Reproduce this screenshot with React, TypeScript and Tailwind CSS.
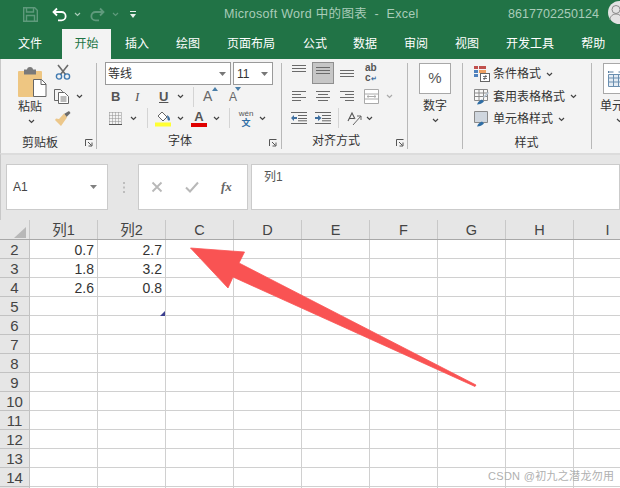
import React from "react";

const FONT = { fontFamily: '"Liberation Sans","Noto Sans CJK SC",sans-serif' };

const Chev = ({ c = "#444", className = "" }: { c?: string; className?: string }) => (
  <svg width="7" height="5" viewBox="0 0 7 5" className={className}>
    <path d="M1 1l2.5 2.5L6 1" fill="none" stroke={c} strokeWidth="1.2" />
  </svg>
);
const Caret = ({ c = "#777" }: { c?: string }) => (
  <svg width="7" height="4" viewBox="0 0 7 4"><path d="M0 0h7L3.5 4z" fill={c} /></svg>
);
const Launcher = () => (
  <svg width="8" height="8" viewBox="0 0 8 8">
    <path d="M.5 7V.5H7.5M3 3l3.5 3.5M3.500 7H7V3.500" fill="none" stroke="#555" strokeWidth="1" />
  </svg>
);
const Sep = () => <div className="w-px h-[86px] mt-[4px] bg-[#b8b8b8] shrink-0" />;
const VSep = ({ h = 20 }: { h?: number }) => (
  <div className="w-px bg-[#d4d4d4] shrink-0" style={{ height: h }} />
);

const Lines = ({ rows, w = 14 }: { rows: [number, number][]; w?: number }) => (
  <svg width={w} height="14" viewBox={`0 0 ${w} 14`}>
    {rows.map(([x, l], i) => (
      <rect key={i} x={x} y={1 + i * 3} width={l} height="1" fill="#6a6a6a" />
    ))}
  </svg>
);

const Indent = ({ right }: { right?: boolean }) => (
  <svg width="16" height="12" viewBox="0 0 16 12">
    <path d="M0 .5h16M7 3.500h9M7 6.500h9M0 11.500h16M7 8.800h9" stroke="#666" strokeWidth="1" fill="none" />
    {right ? (
      <path d="M0 5h3V3l3.500 3L3 9V7H0z" fill="#3f6f9f" />
    ) : (
      <path d="M6 5H3V3L0 6l3 3V7h3z" fill="#3f6f9f" />
    )}
  </svg>
);

const Row = ({ n, cells }: { n?: number; cells?: [string, string] }) => (
  <div className="flex h-[19px]">
    <div className="w-[30px] shrink-0 h-[19px] bg-[#e6e6e6] border-r border-b border-[#c2c2c2] flex items-end justify-center text-[15px] leading-[17px] text-[#444]">
      {n}
    </div>
    {Array.from({ length: 9 }).map((_, i) => (
      <div
        key={i}
        className="w-[68px] shrink-0 h-[19px] border-r border-b border-[#d0d0d0] flex items-end justify-end pr-[3px] text-[14px] leading-[16px] text-[#333]"
      >
        {cells && i < 2 ? cells[i] : ""}
      </div>
    ))}
  </div>
);

const tabs: [string, number][] = [
  ["插入", 125], ["绘图", 176], ["页面布局", 227], ["公式", 303], ["数据", 353],
  ["审阅", 404], ["视图", 455], ["开发工具", 506], ["帮助", 581],
];

const ColHead = ({ t, w = 68 }: { t: string; w?: number }) => (
  <div
    className="shrink-0 h-[19px] border-r border-[#c8c8c8] flex items-end justify-center text-[14.5px] leading-[18px] text-[#444]"
    style={{ width: w }}
  >
    {t}
  </div>
);

export default function App() {
  return (
    <div className="relative w-[620px] h-[488px] overflow-hidden bg-white" style={FONT}>
      {/* Title bar */}
      <div className="h-[29px] bg-[#217346] flex items-center relative text-[#a9ccb9]">
        <svg width="15" height="15" viewBox="0 0 15 15" className="ml-[23px]">
          <path d="M.7.7h11l2.600 2.600v11H.7z" fill="none" stroke="#5f9a7c" strokeWidth="1.400" />
          <path d="M3.500 1v4h7V1M3.500 14V8.500h8V14" fill="none" stroke="#5f9a7c" strokeWidth="1.400" />
        </svg>
        <svg width="16" height="15" viewBox="0 0 16 15" className="ml-[14px]">
          <path d="M5 1.500L1.500 5 5 8.500M2 5h7.500a4 4 0 0 1 0 8.300H6" fill="none" stroke="#fff" strokeWidth="1.800" />
        </svg>
        <Chev c="#a9ccb9" className="ml-[6px]" />
        <svg width="16" height="15" viewBox="0 0 16 15" className="ml-[8px]">
          <path d="M11 1.500L14.500 5 11 8.500M14 5H6.500a4 4 0 0 0 0 8.300H10" fill="none" stroke="#5f9a7c" strokeWidth="1.800" />
        </svg>
        <Chev c="#5f9a7c" className="ml-[7px]" />
        <svg width="6" height="8" viewBox="0 0 6 8" className="ml-[11px]">
          <path d="M0 0h6v1H0zM0 3h6L3 7z" fill="#e8f0ec" />
        </svg>
        <div className="ml-[88px] text-[12.5px] whitespace-pre tracking-[0.3px]">Microsoft Word 中的图表  -  Excel</div>
        <div className="ml-auto mr-[21px] text-[12.5px] tracking-[0.05px]">8617702250124</div>
        <div className="absolute left-[608px] top-[1px] w-[24px] h-[23px] rounded-full bg-[#e3e3e3] flex justify-center">
          <svg width="14" height="16" viewBox="0 0 14 16" className="-ml-[8px] mt-[3px]">
            <circle cx="7" cy="5.500" r="4" fill="none" stroke="#8a8a8a" strokeWidth="1" />
            <path d="M1 16c0-4 3-6 6-6s6 2 6 6" fill="none" stroke="#8a8a8a" strokeWidth="1" />
          </svg>
        </div>
      </div>

      {/* Tabs */}
      <div className="h-[30px] bg-[#217346] flex items-center text-[12px] text-white">
        <div className="ml-[18px] w-[24px] whitespace-nowrap">文件</div>
        <div className="ml-[20px] w-[49px] h-[30px] bg-[#f3f3f3] text-[#217346] flex items-center justify-center">开始</div>
        <div className="relative flex-1 h-full flex items-center">
          {tabs.map(([t], i) => (
            <div
              key={t}
              className="whitespace-nowrap"
              style={{ marginLeft: i === 0 ? 14 : tabs[i][1] - tabs[i - 1][1] - tabs[i - 1][0].length * 12 }}
            >
              {t}
            </div>
          ))}
        </div>
      </div>

      {/* Ribbon */}
      <div className="h-[94px] bg-[#f3f3f3] flex text-[#333] border-l border-[#c8c8c8] text-[12px]">
        {/* Clipboard */}
        <div className="w-[95px] shrink-0 flex flex-col">
          <div className="flex h-[74px]">
            <div className="w-[53px] pl-[17px] pt-[8px] flex flex-col">
              <svg width="29" height="30" viewBox="0 0 29 30">
                <rect x="0" y="4" width="24" height="26" rx="1" fill="#eec682" />
                <rect x="6" y="2.500" width="12" height="5" fill="#7a7a7a" />
                <circle cx="12" cy="3" r="3" fill="#7a7a7a" />
                <path d="M15.500 12.500h8l4.500 4.500v12.500h-12.500z" fill="#fff" stroke="#666" />
                <path d="M23 12.500v5h5" fill="none" stroke="#666" />
              </svg>
              <div className="text-[12px] leading-[16px] mt-[2px] whitespace-nowrap">粘贴</div>
              <Chev className="ml-[10px] mt-[4px]" />
            </div>
            <div className="flex flex-col pt-[5px]">
              <svg width="16" height="16" viewBox="0 0 16 16" className="ml-[1px]">
                <path d="M3 1l7.500 9.500M13 1L5.500 10.500" stroke="#6b6b6b" strokeWidth="1.600" fill="none" />
                <circle cx="4" cy="12.500" r="2.600" fill="none" stroke="#3f79b0" strokeWidth="1.400" />
                <circle cx="12" cy="12.500" r="2.600" fill="none" stroke="#3f79b0" strokeWidth="1.400" />
              </svg>
              <div className="flex items-center mt-[9px]">
                <svg width="15" height="15" viewBox="0 0 15 15">
                  <path d="M.5.500h6l2 2V3M.5.500v11H4" fill="none" stroke="#666" />
                  <path d="M4.500 3.500h6l4 4v7h-10z" fill="#fff" stroke="#666" />
                  <path d="M6.500 8h6M6.500 10h6M6.500 12h6" stroke="#777" />
                </svg>
                <Chev className="ml-[7px]" />
              </div>
              <svg width="17" height="16" viewBox="0 0 17 16" className="mt-[7px]">
                <path d="M10 3l5-3 1.500 2-4 4z" fill="#6b6b6b" />
                <path d="M10 2.500l3 4L7 15 1 9 2 7.500l3 .5z" fill="#ecc78a" />
              </svg>
            </div>
          </div>
          <div className="flex items-center h-[20px]">
            <div className="ml-[21px] w-[36px] text-center whitespace-nowrap leading-[20px]">剪贴板</div>
            <div className="ml-[27px] flex"><Launcher /></div>
          </div>
        </div>
        <Sep />

        {/* Font */}
        <div className="w-[184px] shrink-0 flex flex-col">
          <div className="flex pt-[3px] pl-[8px] gap-[2px] h-[27px]">
            <div className="w-[126px] h-[23px] bg-white border border-[#9a9a9a] flex items-center justify-between pl-[2px] pr-[4px] text-[12px]">
              <span>等线</span><Caret />
            </div>
            <div className="w-[40px] h-[23px] bg-white border border-[#9a9a9a] flex items-center justify-between pl-[3px] pr-[4px] text-[12px]">
              <span>11</span><Caret />
            </div>
          </div>
          <div className="flex items-center h-[21px] pl-[14px]">
            <span className="w-[24px] font-bold text-[13px] text-[#555]">B</span>
            <span className="w-[24px] italic text-[13px] text-[#555]" style={{ fontFamily: '"Liberation Serif",serif' }}>I</span>
            <span className="w-[17px] underline font-bold text-[13px] text-[#555]">U</span>
            <Chev className="ml-[1px]" />
            <div className="ml-[9px]"><VSep /></div>
            <div className="relative ml-[9px] w-[22px] text-[#666] text-[14px]">
              A
              <svg width="6" height="4" viewBox="0 0 6 4" className="absolute left-[9px] top-[1px]"><path d="M0 4h6L3 0z" fill="#4a7ea8" /></svg>
            </div>
            <div className="relative ml-[4px] w-[14px] text-[#666] text-[12px]">
              A
              <svg width="6" height="4" viewBox="0 0 6 4" className="absolute left-[6px] -top-[1px]"><path d="M0 0h6L3 4z" fill="#4a7ea8" /></svg>
            </div>
          </div>
          <div className="flex items-center h-[22px] pl-[12px]">
            <svg width="13" height="13" viewBox="0 0 13 13">
              <path d="M.5.500h12M.5 3.500h12M.5 6.500h12M.5 9.500h12M.5.500v12M3.500.500v12M6.500.500v12M9.500.500v12M12.500.500v12" stroke="#8f8f8f" strokeWidth="1" strokeDasharray="1 1" fill="none" />
              <path d="M0 12.500h13" stroke="#555" />
            </svg>
            <Chev className="ml-[8px]" />
            <div className="ml-[10px]"><VSep /></div>
            <svg width="16" height="17" viewBox="0 0 16 17" className="ml-[7px]">
              <path d="M3 6l4-4 5 5-4 4z" fill="#fff" stroke="#666" />
              <path d="M12 5c2 1 3 3 3 4.500S13 11 12.500 9.500z" fill="#3f6f9f" />
              <rect x="0" y="12.500" width="16" height="4" fill="#ffff33" />
            </svg>
            <Chev className="ml-[6px]" />
            <div className="ml-[7px] w-[16px] flex flex-col items-center">
              <span className="text-[13px] font-bold leading-[13px] text-[#555]">A</span>
              <div className="w-[16px] h-[4px] bg-[#e00000]" />
            </div>
            <Chev className="ml-[6px]" />
            <div className="ml-[9px]"><VSep /></div>
            <div className="ml-[8px] w-[16px] flex flex-col items-center leading-none">
              <span className="text-[8px] text-[#555] leading-[9px]">wén</span>
              <span className="text-[9px] text-[#2f6ea5] font-bold leading-[10px]">文</span>
            </div>
            <Chev className="ml-[5px]" />
          </div>
          <div className="flex items-center h-[24px]">
            <div className="ml-[71px] w-[24px] whitespace-nowrap">字体</div>
            <div className="ml-[77px] flex mt-[4px]"><Launcher /></div>
          </div>
        </div>
        <Sep />

        {/* Alignment */}
        <div className="w-[125px] shrink-0 flex flex-col">
          <div className="flex h-[27px] pl-[10px] pt-[3px]">
            <div className="w-[14px] mt-[2px]"><Lines rows={[[0, 14], [0, 14], [0, 14]]} /></div>
            <div className="ml-[6px] w-[22px] h-[22px] bg-[#c6c6c6] border border-[#8f8f8f] flex items-center justify-center">
              <Lines rows={[[0, 14], [0, 14], [0, 14]]} />
            </div>
            <div className="ml-[6px] w-[14px] mt-[7px]"><Lines rows={[[0, 14], [0, 14], [0, 14]]} /></div>
            <div className="ml-[11px] w-[14px] flex flex-col text-[10px] leading-[10px] mt-[1px] text-[#555] font-bold">
              <span>ab</span>
              <div className="flex items-end">
                <span>c</span>
                <span className="text-[#3f6f9f] text-[7px] leading-[8px]">↵</span>
              </div>
            </div>
          </div>
          <div className="flex items-center h-[21px] pl-[10px]">
            <Lines rows={[[0, 14], [0, 9], [0, 14], [0, 9]]} />
            <div className="ml-[10px]"><Lines rows={[[0, 14], [2, 10], [0, 14], [2, 10]]} /></div>
            <div className="ml-[10px]"><Lines rows={[[0, 14], [5, 9], [0, 14], [5, 9]]} /></div>
            <svg width="15" height="15" viewBox="0 0 15 15" className="ml-[10px]">
              <path d="M.5.500h14v14H.5zM.5 5h14M.5 10h14" fill="#fff" stroke="#aaa" />
              <path d="M3 7.500h9M3 7.500l1.500-1M3 7.500l1.500 1M12 7.500l-1.500-1M12 7.500l-1.500 1" stroke="#aaa" fill="none" />
            </svg>
            <Chev c="#aaa" className="ml-[7px]" />
          </div>
          <div className="flex items-center h-[22px] pl-[9px]">
            <Indent />
            <div className="ml-[8px]"><Indent right /></div>
            <div className="ml-[7px]"><VSep /></div>
            <svg width="16" height="16" viewBox="0 0 16 16" className="ml-[7px]">
              <path d="M2 11l4-8 3 6M3 8.500h5" stroke="#555" strokeWidth="1.100" fill="none" />
              <path d="M7 15L15 6M11 6h4v4" stroke="#666" fill="none" />
            </svg>
            <Chev className="ml-[4px]" />
          </div>
          <div className="flex items-center h-[24px]">
            <div className="ml-[30px] w-[48px] whitespace-nowrap">对齐方式</div>
            <div className="ml-[36px] flex mt-[4px]"><Launcher /></div>
          </div>
        </div>
        <Sep />

        {/* Number */}
        <div className="w-[54px] shrink-0 flex flex-col items-center pt-[4px]">
          <div className="w-[32px] h-[31px] bg-white border border-[#a8a8a8] flex items-center justify-center text-[15px] text-[#555]">%</div>
          <div className="mt-[3px] text-[12px] leading-[18px]">数字</div>
          <Chev className="mt-[3px]" />
        </div>
        <Sep />

        {/* Styles */}
        <div className="w-[128px] shrink-0 flex flex-col">
          <div className="h-[74px] pl-[11px] pt-[4px] flex flex-col">
            <div className="flex items-center h-[22px] whitespace-nowrap">
              <svg width="16" height="16" viewBox="0 0 16 16">
                <rect x="0" y="0" width="4" height="3" fill="#c0504d" /><rect x="5" y="0" width="7" height="3" fill="#c0504d" />
                <rect x="0" y="4" width="4" height="3" fill="#4f81bd" /><rect x="5" y="4" width="7" height="3" fill="#f0a060" />
                <rect x="0" y="8" width="4" height="3" fill="#4f81bd" />
                <rect x="6.500" y="7.500" width="9" height="8" fill="#fff" stroke="#666" />
                <path d="M9 10.500h4M9 12.500h4M12 9l-2 5" stroke="#555" strokeWidth=".8" />
              </svg>
              <span className="ml-[3px]">条件格式</span><Chev className="ml-[5px]" />
            </div>
            <div className="flex items-center h-[23px] whitespace-nowrap">
              <svg width="16" height="16" viewBox="0 0 16 16">
                <path d="M.5.500h13v11H.5zM.5 4h13M.5 7.500h13M5 .500v11M9.500.500v11" fill="#f8f8f8" stroke="#8a8a8a" />
                <path d="M9 8l5-5 1 1-5 5z" fill="#b8c6d4" />
                <path d="M3 15.500c1-3 3-4 5-5l2 2c-2 2-4 3-7 3z" fill="#2f6ea5" />
              </svg>
              <span className="ml-[3px]">套用表格格式</span><Chev className="ml-[5px]" />
            </div>
            <div className="flex items-center h-[22px] whitespace-nowrap">
              <svg width="16" height="16" viewBox="0 0 16 16">
                <path d="M.5.500h13v11H.5z" fill="#cfd6de" stroke="#8a8a8a" />
                <path d="M3 15.500c1-3 3-4 5-5l2 2c-2 2-4 3-7 3z" fill="#2f6ea5" />
              </svg>
              <span className="ml-[3px]">单元格样式</span><Chev className="ml-[5px]" />
            </div>
          </div>
          <div className="h-[20px] flex items-center justify-center leading-[20px] pr-[1px]">样式</div>
        </div>
        <Sep />

        {/* Cells */}
        <div className="flex-1 flex flex-col pt-[4px] pl-[11px] overflow-hidden">
          <div className="w-[32px] h-[31px] bg-white border border-[#a8a8a8] flex items-center justify-center shrink-0">
            <svg width="16" height="18" viewBox="0 0 16 18" className="-ml-[6px]">
              <path d="M.5 4.500h15v12H.5zM.5 8h15M.5 12h15M5.500 4.500v12M10.500 4.500v12" fill="#e4ecf4" stroke="#6a8fb0" />
              <path d="M.5 1v2M.5 2h5M10.500 2h5" stroke="#5a7fa0" />
            </svg>
          </div>
          <div className="mt-[3px] -ml-[3px] leading-[18px] whitespace-nowrap">单元格</div>
          <Chev className="mt-[3px] ml-[13px]" />
        </div>
      </div>

      {/* Formula area */}
      <div className="h-[67px] bg-[#e6e6e6] border-t-2 border-[#dcdcdc] flex pt-[9px] pl-[5px] border-l border-l-[#c8c8c8]">
        <div className="w-[102px] h-[46px] bg-white border border-[#cbcbcb] flex items-center justify-between pl-[6px] pr-[10px] text-[12px] text-[#444]">
          <span>A1</span><Caret c="#808080" />
        </div>
        <div className="w-[30px] h-[46px] flex items-center justify-center">
          <svg width="3" height="11" viewBox="0 0 3 11"><path d="M1 0h2v2H1zM1 4.500h2v2H1zM1 9h2v2H1z" fill="#bdbdbd" /></svg>
        </div>
        <div className="w-[110px] h-[46px] bg-white border border-[#cbcbcb] flex items-center text-[#b5b5b5]">
          <svg width="12" height="12" viewBox="0 0 12 12" className="ml-[12px]"><path d="M1.500 1.500l9 9M10.500 1.500l-9 9" stroke="#b8b8b8" strokeWidth="1.800" /></svg>
          <svg width="14" height="12" viewBox="0 0 14 12" className="ml-[22px]"><path d="M1 6.500L5 10.500 13 1.500" stroke="#b8b8b8" strokeWidth="2" fill="none" /></svg>
          <span className="ml-[22px] italic text-[13px] font-bold text-[#666]" style={{ fontFamily: '"Liberation Serif",serif' }}>fx</span>
        </div>
        <div className="ml-[3px] flex-1 h-[46px] bg-white border border-[#cbcbcb] pl-[12px] pt-[3px] text-[12px] leading-[18px] text-[#555]">列1</div>
      </div>

      {/* Header */}
      <div className="flex h-[20px] bg-[#e6e6e6] border-b border-[#a8a8a8]">
        <div className="w-[30px] shrink-0 h-[19px] border-r border-[#c8c8c8] relative">
          <svg width="12" height="11" viewBox="0 0 12 11" className="absolute right-[3px] bottom-[1px]"><path d="M12 0v11H0z" fill="#b8b8b8" /></svg>
        </div>
        {["列1", "列2", "C", "D", "E", "F", "G", "H", "I"].map((t) => <ColHead key={t} t={t} />)}
      </div>

      {/* Grid */}
      <Row n={2} cells={["0.7", "2.7"]} />
      <Row n={3} cells={["1.8", "3.2"]} />
      <Row n={4} cells={["2.6", "0.8"]} />
      {[5, 6, 7, 8, 9, 10, 11, 12, 13, 14].map((n) => <Row key={n} n={n} />)}
      <Row />

      {/* Table resize handle */}
      <svg width="5" height="5" viewBox="0 0 5 5" className="absolute left-[160px] top-[311px]"><path d="M5 0v5H0z" fill="#3b3f8f" /></svg>

      {/* Arrow annotation */}
      <svg width="620" height="488" viewBox="0 0 620 488" className="absolute left-0 top-0 pointer-events-none">
        <path d="M190.500 248L244.500 252 239 263 476 385 475 386.500 233 277 228 288z" fill="#f95353" stroke="#f95353" strokeWidth="0.8" strokeLinejoin="round" />
      </svg>

      {/* Watermark */}
      <div className="absolute left-[488px] top-[469px] text-[11px] leading-[14px] text-[#b0b0b0] whitespace-nowrap tracking-[0.3px]">CSDN @初九之潜龙勿用</div>
    </div>
  );
}
